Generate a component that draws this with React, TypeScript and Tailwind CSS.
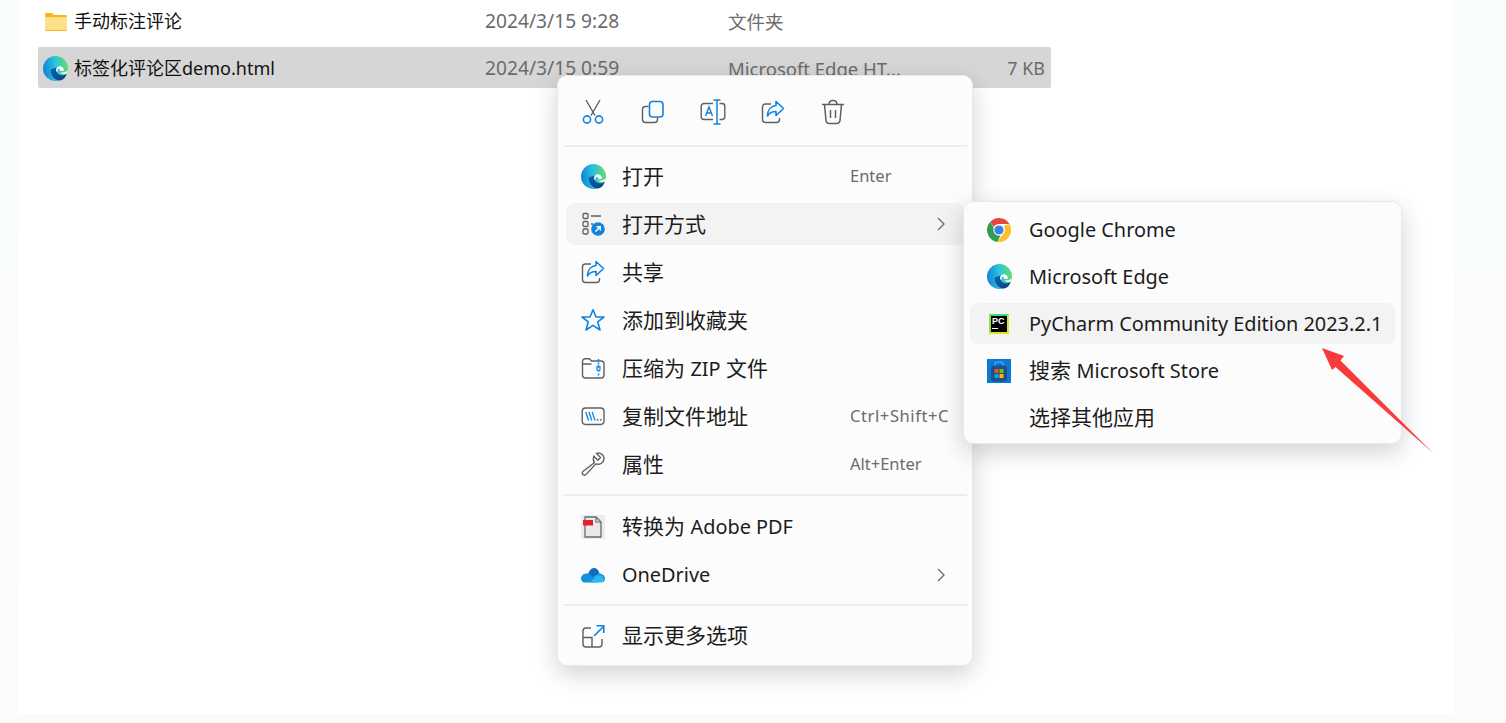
import type { ReactNode } from "react";

// ---- icons ----
const BLUE = "#0f83e0";
const GREY = "#5f5f5f";

const EdgeIcon = ({ id }: { id: string }) => (
  <svg width="25" height="25" viewBox="0 0 24 24" className="shrink-0">
    <defs>
      <linearGradient id={`${id}a`} x1="0" y1="0.5" x2="1" y2="0.4">
        <stop offset="0" stopColor="#0f84d4" />
        <stop offset="0.5" stopColor="#2cc3dc" />
        <stop offset="1" stopColor="#66dc6c" />
      </linearGradient>
      <linearGradient id={`${id}b`} x1="0" y1="0" x2="1" y2="1">
        <stop offset="0" stopColor="#0d62b4" />
        <stop offset="1" stopColor="#0a3f86" />
      </linearGradient>
    </defs>
    <circle cx="12" cy="12" r="12" fill={`url(#${id}a)`} />
    <path d="M7.500 13C7 18 11 23.800 16.500 23.500C19.500 23 21.500 20.800 22.800 17C20 19 17 19 15 17.500C13 16 12.800 13.500 13 11Z" fill={`url(#${id}b)`} />
    <path d="M12.500 14C12.500 11 14.500 9.500 16.500 9.800C18.500 10.100 20 11.500 20 13.200C20 14 19.500 14.400 18.500 14.400L16 14C17 13 16.500 12.300 15.500 12.300C14.300 12.300 13.500 13.500 13.800 15.500C13 15.300 12.500 14.800 12.500 14Z" fill="#fff" />
    <path d="M16.500 15.300C19 16.300 21.500 15.800 23.700 14C23.500 15.200 23.200 16 22.800 16.900C20.500 17.800 18.300 17.300 16.500 15.300Z" fill="#fff" />
  </svg>
);

const ChromeIcon = () => (
  <svg width="24" height="24" viewBox="0 0 24 24" className="shrink-0">
    <path d="M12 0A12 12 0 0 1 22.400 6H12A6 6 0 0 0 6.800 9L3.200 3.800A12 12 0 0 1 12 0Z" fill="#e8453c" />
    <path d="M1.600 18A12 12 0 0 1 3.200 3.800L8.800 13.500A6 6 0 0 0 13.500 17.800L10.200 23.900A12 12 0 0 1 1.600 18Z" fill="#2f9e4f" />
    <path d="M22.400 6A12 12 0 0 1 10.200 23.900L15.600 16.500A6 6 0 0 0 16.500 8Z" fill="#fbc02d" />
    <circle cx="12" cy="12" r="5.600" fill="#fff" />
    <circle cx="12" cy="12" r="4.600" fill="#3b82e8" />
  </svg>
);

const CutIcon = () => (
  <svg width="24" height="26" viewBox="0 0 24 26" fill="none" className="shrink-0">
    <path d="M5 1L14 16.500M19 1L10 16.500" stroke={GREY} strokeWidth="1.400" />
    <circle cx="6" cy="20.500" r="3.600" stroke={BLUE} strokeWidth="1.600" />
    <circle cx="18" cy="20.500" r="3.600" stroke={BLUE} strokeWidth="1.600" />
  </svg>
);

const CopyIcon = () => (
  <svg width="24" height="24" viewBox="0 0 24 24" fill="none" className="shrink-0">
    <path d="M7.500 6.500H4.500C2.800 6.500 1.500 7.800 1.500 9.500V19.500C1.500 21.200 2.800 22.500 4.500 22.500H13.500C15.200 22.500 16.500 21.200 16.500 19.500V17" stroke={GREY} strokeWidth="1.400" />
    <rect x="8.500" y="1.500" width="13.500" height="15.500" rx="3" stroke={BLUE} strokeWidth="1.600" />
  </svg>
);

const RenameIcon = () => (
  <svg width="26" height="26" viewBox="0 0 26 26" fill="none" className="shrink-0">
    <path d="M13 4.500H4C2.500 4.500 1.200 5.700 1.200 7.200V17.800C1.200 19.300 2.500 20.500 4 20.500H13M19.500 4.500H22C23.500 4.500 24.800 5.700 24.800 7.200V17.800C24.800 19.300 23.500 20.500 22 20.500H19.500" stroke={GREY} strokeWidth="1.400" />
    <path d="M13.500 1H20.500M17 1V25M13.500 25H20.500" stroke={BLUE} strokeWidth="1.500" />
    <path d="M5.500 17L9 8L12.500 17M6.700 14H11.300" stroke={BLUE} strokeWidth="1.400" />
  </svg>
);

const ShareIcon = () => (
  <svg width="24" height="24" viewBox="0 0 24 24" fill="none" className="shrink-0">
    <path d="M10 4H4.500C2.800 4 1.500 5.300 1.500 7V19.500C1.500 21.200 2.800 22.500 4.500 22.500H15.500C17.200 22.500 18.500 21.200 18.500 19.500V18" stroke={GREY} strokeWidth="1.400" />
    <path d="M15 1.500L22.500 8.500L15 15.500V11.500C11.500 11.500 8.500 12.500 6.500 16C6.500 10 10 6 15 5.500Z" stroke={BLUE} strokeWidth="1.600" strokeLinejoin="round" />
  </svg>
);

const TrashIcon = () => (
  <svg width="24" height="26" viewBox="0 0 24 26" fill="none" className="shrink-0">
    <path d="M1 5.500H23M8 5.500C8 3 9.500 1.500 12 1.500C14.500 1.500 16 3 16 5.500M3.500 5.500L5 21.500C5.200 23.300 6.400 24.500 8.200 24.500H15.800C17.600 24.500 18.800 23.300 19 21.500L20.500 5.500" stroke={GREY} strokeWidth="1.500" />
    <path d="M9.500 11V19M14.500 11V19" stroke={GREY} strokeWidth="1.500" />
  </svg>
);

const OpenWithIcon = () => (
  <svg width="24" height="24" viewBox="0 0 24 24" fill="none" className="shrink-0">
    <rect x="2" y="1.500" width="5" height="5" rx="1.200" stroke={GREY} strokeWidth="1.300" />
    <rect x="2" y="9.500" width="5" height="5" rx="1.200" stroke={GREY} strokeWidth="1.300" />
    <rect x="2" y="17" width="5" height="5" rx="1.200" stroke={GREY} strokeWidth="1.300" />
    <path d="M10 4H20M10 12H12" stroke={GREY} strokeWidth="1.300" />
    <circle cx="17" cy="17" r="6.800" fill={BLUE} />
    <path d="M14.500 19.500L19 15M15.500 14.800H19.300V18.600" stroke="#fff" strokeWidth="1.500" />
  </svg>
);

const StarIcon = () => (
  <svg width="24" height="24" viewBox="0 0 24 24" fill="none" className="shrink-0">
    <path d="M12 1.800L15 9H23L16.700 13.800L19 22L12 17.400L5 22L7.300 13.800L1 9H9Z" stroke={BLUE} strokeWidth="1.600" strokeLinejoin="round" />
  </svg>
);

const ZipIcon = () => (
  <svg width="24" height="24" viewBox="0 0 24 24" fill="none" className="shrink-0">
    <path d="M1.500 6.500V19C1.500 20.700 2.700 22 4.400 22H20C21.700 22 23 20.700 23 19V8C23 6.300 21.700 5 20 5H10.500L8.500 2.800H4.400C2.700 2.800 1.500 4 1.500 5.500V8H10.500" stroke={GREY} strokeWidth="1.400" />
    <path d="M17.500 3V22" stroke={BLUE} strokeWidth="1.500" strokeDasharray="2 1.600" />
    <rect x="16" y="10" width="3" height="4.500" rx="0.800" stroke={BLUE} strokeWidth="1.200" />
  </svg>
);

const PathIcon = () => (
  <svg width="24" height="24" viewBox="0 0 24 24" fill="none" className="shrink-0">
    <rect x="1.200" y="4" width="21.800" height="16.500" rx="3.400" stroke={GREY} strokeWidth="1.400" />
    <path d="M4.800 8L7.600 16.500M8 8L10.800 16.500M11.200 8L14 16.500" stroke={BLUE} strokeWidth="1.300" />
    <path d="M15.800 15.800H17.400M19 15.800H20.600" stroke={GREY} strokeWidth="1.500" />
  </svg>
);

const WrenchIcon = () => (
  <svg width="24" height="24" viewBox="0 0 24 24" fill="none" className="shrink-0">
    <path d="M23 6.500C23 3.300 20.300 1 17.200 1C16.500 1 15.900 1.100 15.300 1.300L19.500 5.500L16.800 8.200L12.700 4.100C11.800 7 12.600 9.500 13.300 10.800L2.200 19.200C1 20.200 1 21.800 2 22.600C3 23.500 4.300 23.400 5.200 22.400L14.800 11.900C18.800 13.300 23 10.500 23 6.500Z" stroke={GREY} strokeWidth="1.400" strokeLinejoin="round" />
  </svg>
);

const PdfIcon = () => (
  <div className="w-6 h-6 shrink-0 bg-[#ececec]">
    <svg width="24" height="24" viewBox="0 0 24 24" fill="none">
      <path d="M4 2H15L20 7V22H4Z" fill="#e9e9e9" stroke="#6a6a6a" strokeWidth="1.300" />
      <path d="M15 2V7H20" stroke="#6a6a6a" strokeWidth="1.200" />
      <rect x="2" y="5" width="10" height="5.500" fill="#e5202e" />
    </svg>
  </div>
);

const OneDriveIcon = () => (
  <svg width="24" height="24" viewBox="0 0 24 24" className="shrink-0">
    <path d="M6.500 13C7.500 8.500 10 5 13 5C16 5 17.800 7.500 18.500 10.500L12 18Z" fill="#0f6cc0" />
    <path d="M18 10.500C21.800 10.500 24 13 24 15.500C24 17.500 23 18.500 22 19L12 14Z" fill="#1c9ae6" />
    <path d="M5.500 10.500C8 10.500 10 11.500 11 13L17 19.500H4C1.500 19.500 0 17.800 0 15.500C0 12.800 2.500 10.500 5.500 10.500Z" fill="#1490df" />
    <path d="M9 19.500L15 13C17 11.500 20 12 22 14.500L23.500 17C23.200 18.500 22 19.500 20 19.500Z" fill="#30b6f0" />
  </svg>
);

const MoreIcon = () => (
  <svg width="24" height="24" viewBox="0 0 24 24" fill="none" className="shrink-0">
    <path d="M10 4H5C3.300 4 2 5.300 2 7V20C2 21.700 3.300 23 5 23H18C19.700 23 21 21.700 21 20V15M2 13.500H11V23" stroke={GREY} strokeWidth="1.400" />
    <path d="M13 12L22 3M15.500 1.800H22.800V9" stroke={BLUE} strokeWidth="1.600" />
  </svg>
);

const PyCharmIcon = () => (
  <div className="w-5 h-5 shrink-0 border-2 border-[#dfe620] border-l-[#8fe040] border-t-[#3ddc84] bg-black flex flex-col pl-[1px] leading-none">
    <span className="text-white text-[9px] font-bold leading-[10px] font-['Liberation_Sans',sans-serif]">PC</span>
    <span className="w-[6px] h-px bg-white mt-[2px]" />
  </div>
);

const StoreIcon = () => (
  <svg width="24" height="24" viewBox="0 0 24 24" className="shrink-0">
    <rect width="24" height="24" fill="#0a78d4" />
    <path d="M8 7V5C8 3.800 9 3 10 3H14C15 3 16 3.800 16 5V7" fill="none" stroke="#5cb4f0" strokeWidth="1.200" />
    <rect x="4" y="6.500" width="16" height="16" rx="3" fill="#1c4f8c" />
    <rect x="7.500" y="10" width="4" height="4" fill="#f25022" />
    <rect x="12.500" y="10" width="4" height="4" fill="#7fba00" />
    <rect x="7.500" y="15" width="4" height="4" fill="#00a4ef" />
    <rect x="12.500" y="15" width="4" height="4" fill="#ffb900" />
  </svg>
);

const FolderIcon = () => (
  <svg width="22" height="18" viewBox="0 0 22 18" className="shrink-0">
    <path d="M0 1.500C0 .7.700 0 1.500 0H7L9 2H20.500C21.300 2 22 2.700 22 3.500V5H0Z" fill="#f9b715" />
    <path d="M0 4H22V16.500C22 17.300 21.300 18 20.500 18H1.500C.7 18 0 17.300 0 16.500Z" fill="#fde08a" />
    <path d="M0 17H22V16.500C22 17.300 21.300 18 20.500 18H1.500C.7 18 0 17.300 0 16.500Z" fill="#f4b31a" />
  </svg>
);

const Chevron = () => (
  <svg width="10" height="16" viewBox="0 0 10 16" fill="none" className="shrink-0">
    <path d="M2 2L8 8L2 14" stroke="#6a6a6a" strokeWidth="1.300" />
  </svg>
);

// Latin runs sit a little smaller than the CJK around them
const L = ({ children }: { children: ReactNode }) => <span className="text-[19.9px]">{children}</span>;

// ---- rows ----
const FileRow = ({ icon, name, date, type, size, selected }: { icon: ReactNode; name: string; date: string; type: string; size?: string; selected?: boolean }) => (
  <div className={`flex items-center h-[41px] rounded-[2px] pt-[2px] text-[18px] ${selected ? "bg-[#d6d6d6]" : ""}`}>
    <div className={`w-[36px] shrink-0 ${selected ? "pl-[5px]" : "pl-[7px]"}`}>{icon}</div>
    <span className="w-[411px] shrink-0 text-[#111]">{name}</span>
    <span className="w-[243px] shrink-0 text-[19.2px] text-[#6b6b6b]">{date}</span>
    <span className="w-[240px] shrink-0 text-[18.5px] text-[#6b6b6b] whitespace-nowrap">{type}</span>
    <span className="flex-1 text-right pr-[6px] text-[#6b6b6b]">{size}</span>
  </div>
);

const MenuRow = ({ icon, label, hint, more, active, low }: { icon: ReactNode; label: ReactNode; hint?: ReactNode; more?: boolean; active?: boolean; low?: boolean }) => (
  <div className={`flex items-center h-[42px] mx-[8px] pl-[15px] rounded-[8px] ${active ? "bg-[#f3f3f3]" : ""}`}>
    <div className="w-[24px] flex justify-center shrink-0">{icon}</div>
    <span className={`ml-[17px] w-[228px] shrink-0 text-[21px] text-[#1c1c1c] whitespace-nowrap ${low ? "pt-[2px]" : ""}`}>{label}</span>
    <span className="text-[16.5px] text-[#6b6b6b] whitespace-nowrap">{hint}</span>
    {more && <span className="ml-[86px]"><Chevron /></span>}
  </div>
);

const SubRow = ({ icon, label, active }: { icon?: ReactNode; label: ReactNode; active?: boolean }) => (
  <div className={`flex items-center h-[41px] pl-[17px] rounded-[8px] ${active ? "bg-[#f3f3f3]" : ""}`}>
    <div className="w-[24px] flex justify-center shrink-0">{icon}</div>
    <span className="ml-[18px] text-[21px] text-[#1c1c1c] whitespace-nowrap">{label}</span>
  </div>
);

const Divider = ({ className }: { className: string }) => <div className={`h-[2px] bg-[#eeeeee] mx-[5px] ${className}`} />;

export default function App() {
  return (
    <div className="relative w-full h-[723px] overflow-hidden pl-[19px] pr-[53px] pb-[9px] bg-gradient-to-b from-[#f8fdfe] to-[#fdfbf9] font-['Noto_Sans','Noto_Sans_CJK_SC',sans-serif]">
      <div className="h-full bg-white pl-[19px] pr-[402px] flex flex-col gap-[6px]">
        <FileRow icon={<FolderIcon />} name="手动标注评论" date="2024/3/15 9:28" type="文件夹" />
        <FileRow icon={<EdgeIcon id="f" />} name="标签化评论区demo.html" date="2024/3/15 0:59" type="Microsoft Edge HT..." size="7 KB" selected />
      </div>

      {/* context menu */}
      <div className="absolute left-[557px] top-[75px] w-[416px] h-[591px] rounded-[10px] border border-[#e8e8e8] bg-[#fcfcfc] shadow-[0_8px_24px_rgba(0,0,0,0.18)]">
        <div className="flex items-center h-[69px] pt-[2px] pl-[5px]">
          {[<CutIcon />, <CopyIcon />, <RenameIcon />, <ShareIcon />, <TrashIcon />].map((icon, i) => (
            <div key={i} className="w-[60px] flex justify-center">{icon}</div>
          ))}
        </div>
        <Divider className="mb-[8px]" />
        <div className="flex flex-col gap-[6px]">
          <MenuRow low icon={<EdgeIcon id="m" />} label="打开" hint="Enter" />
          <MenuRow low icon={<OpenWithIcon />} label="打开方式" more active />
          <MenuRow low icon={<ShareIcon />} label="共享" />
          <MenuRow low icon={<StarIcon />} label="添加到收藏夹" />
          <MenuRow low icon={<ZipIcon />} label={<>压缩为 <L>ZIP</L> 文件</>} />
          <MenuRow low icon={<PathIcon />} label="复制文件地址" hint={<span className="tracking-[0.6px]">Ctrl+Shift+C</span>} />
          <MenuRow low icon={<WrenchIcon />} label="属性" hint="Alt+Enter" />
        </div>
        <Divider className="mt-[9px] mb-[10px]" />
        <div className="flex flex-col gap-[6px]">
          <MenuRow icon={<PdfIcon />} label={<>转换为 <L>Adobe PDF</L></>} />
          <MenuRow icon={<OneDriveIcon />} label={<L>OneDrive</L>} more />
        </div>
        <Divider className="mt-[8px] mb-[9px]" />
        <MenuRow icon={<MoreIcon />} label="显示更多选项" />
      </div>

      {/* open-with submenu */}
      <div className="absolute left-[963px] top-[201px] w-[439px] h-[243px] rounded-[10px] border border-[#e8e8e8] bg-[#fcfcfc] shadow-[0_8px_24px_rgba(0,0,0,0.18)] px-[6px] pt-[7px] flex flex-col gap-[6px]">
        <SubRow icon={<ChromeIcon />} label={<L>Google Chrome</L>} />
        <SubRow icon={<EdgeIcon id="s" />} label={<L>Microsoft Edge</L>} />
        <SubRow icon={<PyCharmIcon />} label={<L>PyCharm Community Edition 2023.2.1</L>} active />
        <SubRow icon={<StoreIcon />} label={<>搜索 <L>Microsoft Store</L></>} />
        <SubRow label="选择其他应用" />
      </div>

      {/* red annotation arrow */}
      <svg className="absolute left-[1315px] top-[340px]" width="125" height="120" viewBox="0 0 125 120">
        <path d="M7 8L29 16L25.500 20.500L118 113L20.500 27L17 30Z" fill="#f93a3a" />
      </svg>
    </div>
  );
}
